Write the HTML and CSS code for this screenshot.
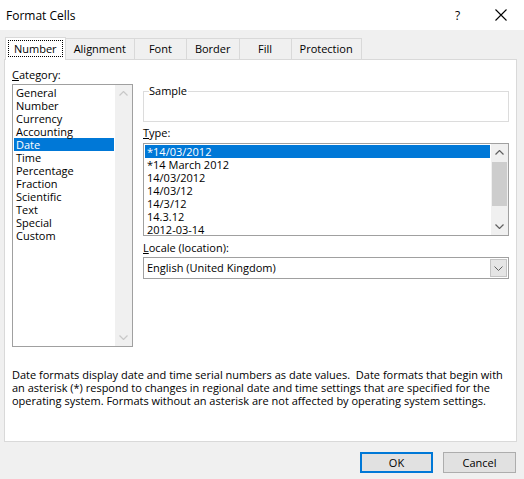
FILE: index.html
```html
<!DOCTYPE html>
<html>
<head>
<meta charset="utf-8">
<title>Format Cells</title>
<link rel="stylesheet" href="styles.css">
</head>
<body>
<div class="dialog">
  <header class="titlebar">
    <span class="title">Format Cells</span>
    <span class="help">?</span>
    <span class="close"><svg width="12" height="12" viewBox="0 0 12 12"><path d="M0.5 0.5L11.5 11.5M11.5 0.5L0.5 11.5" stroke="#000" stroke-width="1.1" fill="none"/></svg></span>
  </header>
  <nav class="tabs">
    <div class="tab active"><span class="focus">Number</span></div>
    <div class="tab">Alignment</div>
    <div class="tab">Font</div>
    <div class="tab">Border</div>
    <div class="tab">Fill</div>
    <div class="tab">Protection</div>
  </nav>
  <main class="panel">
    <div class="cols">
      <div class="left">
        <div class="label"><u>C</u>ategory:</div>
        <div class="listbox cat">
          <ul class="items">
            <li>General</li>
            <li>Number</li>
            <li>Currency</li>
            <li>Accounting</li>
            <li class="sel">Date</li>
            <li>Time</li>
            <li>Percentage</li>
            <li>Fraction</li>
            <li>Scientific</li>
            <li>Text</li>
            <li>Special</li>
            <li>Custom</li>
          </ul>
          <div class="scrollbar disabled">
            <span class="arrow"><svg width="9" height="5" viewBox="0 0 9 5"><path d="M0.5 4.5L4.5 0.5L8.5 4.5" stroke="currentColor" stroke-width="1.2" fill="none"/></svg></span>
            <span class="track"></span>
            <span class="arrow"><svg width="9" height="5" viewBox="0 0 9 5"><path d="M0.5 0.5L4.5 4.5L8.5 0.5" stroke="currentColor" stroke-width="1.2" fill="none"/></svg></span>
          </div>
        </div>
      </div>
      <div class="right">
        <fieldset class="sample"><legend>Sample</legend></fieldset>
        <div class="label label-type"><u>T</u>ype:</div>
        <div class="listbox type">
          <ul class="items">
            <li class="sel">*14/03/2012</li>
            <li>*14 March 2012</li>
            <li>14/03/2012</li>
            <li>14/03/12</li>
            <li>14/3/12</li>
            <li>14.3.12</li>
            <li>2012-03-14</li>
          </ul>
          <div class="scrollbar">
            <span class="arrow"><svg width="9" height="5" viewBox="0 0 9 5"><path d="M0.5 4.5L4.5 0.5L8.5 4.5" stroke="currentColor" stroke-width="1.2" fill="none"/></svg></span>
            <span class="track"><span class="thumb"></span></span>
            <span class="arrow"><svg width="9" height="5" viewBox="0 0 9 5"><path d="M0.5 0.5L4.5 4.5L8.5 0.5" stroke="currentColor" stroke-width="1.2" fill="none"/></svg></span>
          </div>
        </div>
        <div class="label label-locale"><u>L</u>ocale (location):</div>
        <div class="combo">
          <span class="value">English (United Kingdom)</span>
          <span class="drop"><svg width="9" height="5" viewBox="0 0 9 5"><path d="M0.5 0.5L4.5 4.5L8.5 0.5" stroke="currentColor" stroke-width="1" fill="none"/></svg></span>
        </div>
      </div>
    </div>
    <p class="desc">Date formats display date and time serial numbers as date values.&nbsp; Date formats that begin with<br>an asterisk (*) respond to changes in regional date and time settings that are specified for the<br>operating system. Formats without an asterisk are not affected by operating system settings.</p>
  </main>
  <footer class="buttons">
    <button class="btn default">OK</button>
    <button class="btn">Cancel</button>
  </footer>
</div>
</body>
</html>
```
FILE: styles.css
```css
* { box-sizing: border-box; }
html, body { margin: 0; padding: 0; }
body {
  background: #f0f0f0;
  font-family: "Open Sans", "Noto Sans", sans-serif;
  font-size: 11px;
  color: #000;
  width: 524px;
  height: 479px;
  overflow: hidden;
}
.dialog { width: 524px; height: 479px; }

.titlebar {
  height: 30px;
  background: #fff;
  display: flex;
  align-items: center;
  padding-left: 6px;
  font-size: 12px;
}
.title { flex: 1; }
.help { width: 8px; margin-right: 32px; font-size: 12px; }
.close { width: 12px; height: 12px; margin-right: 17px; display: flex; }

.tabs {
  display: flex;
  align-items: flex-end;
  height: 29px;
  padding-left: 5px;
}
.tab {
  height: 21px;
  line-height: 19px;
  padding: 0 8px;
  min-width: 53px;
  text-align: center;
  border: 1px solid #d9d9d9;
  border-bottom: none;
  margin-left: -1px;
  background: #f0f0f0;
}
.tab.active {
  background: #fff;
  height: 23px;
  margin-bottom: -1px;
  padding: 2px 2px 0;
  position: relative;
  z-index: 1;
  line-height: 16px;
  margin-left: 0;
}
.focus {
  display: inline-block;
  border: 1px dotted #000;
  padding: 0 5px;
  line-height: 15px;
}

.panel {
  margin: 0 7px 0 4px;
  height: 383px;
  border: 1px solid #d9d9d9;
  background: #fff;
  padding: 8px 6px 0 7px;
}
.cols {
  display: grid;
  grid-template-columns: 121px 366px;
  column-gap: 10px;
}
.label { line-height: 14px; height: 14px; }
.left .label { margin-bottom: 2px; }

.listbox {
  border: 1px solid #a0a0a0;
  display: flex;
  overflow: hidden;
}
.listbox.cat { height: 263px; }
.listbox.type { height: 93px; }
.items {
  list-style: none;
  margin: 0;
  padding: 1px;
  flex: 1;
}
.items li {
  height: 13px;
  line-height: 13px;
  padding-left: 2px;
  white-space: nowrap;
}
.items li.sel { background: #0078d7; color: #fff; }

.scrollbar {
  width: 17px;
  background: #f0f0f0;
  display: flex;
  flex-direction: column;
  color: #606060;
}
.scrollbar.disabled { color: #c8c8c8; }
.arrow {
  height: 17px;
  display: flex;
  align-items: center;
  justify-content: center;
  flex: none;
}
.track { flex: 1; display: flex; flex-direction: column; }
.thumb {
  margin: 1px 1px 0;
  height: 44px;
  background: #cdcdcd;
}

.right { padding-top: 16px; display: flex; flex-direction: column; }
.sample {
  margin: 0;
  padding: 0 0 0 5px;
  height: 38px;
  border: 1px solid #dcdcdc;
}
.sample legend { padding: 0 1px 0 0; line-height: 14px; }
.label-type { margin-top: 4px; margin-bottom: 3px; }
.label-locale { margin-top: 5px; margin-bottom: 2px; }

.combo {
  height: 22px;
  border: 1px solid #a0a0a0;
  display: flex;
  align-items: stretch;
}
.combo .value { flex: 1; line-height: 20px; padding-left: 3px; }
.drop {
  width: 17px;
  margin: 1px;
  background: #e5e5e5;
  border: 1px solid #c4c4c4;
  display: flex;
  align-items: center;
  justify-content: center;
  color: #606060;
}

.desc {
  margin: 21px 0 0 0;
  line-height: 13px;
  white-space: nowrap;
}

.buttons {
  display: flex;
  justify-content: flex-end;
  gap: 10px;
  padding: 10px 8px 0 0;
}
.btn {
  width: 73px;
  height: 21px;
  font: inherit;
  background: #e1e1e1;
  border: 1px solid #adadad;
  padding: 0;
  color: #000;
}
.btn.default { border: 2px solid #0078d7; }
```
